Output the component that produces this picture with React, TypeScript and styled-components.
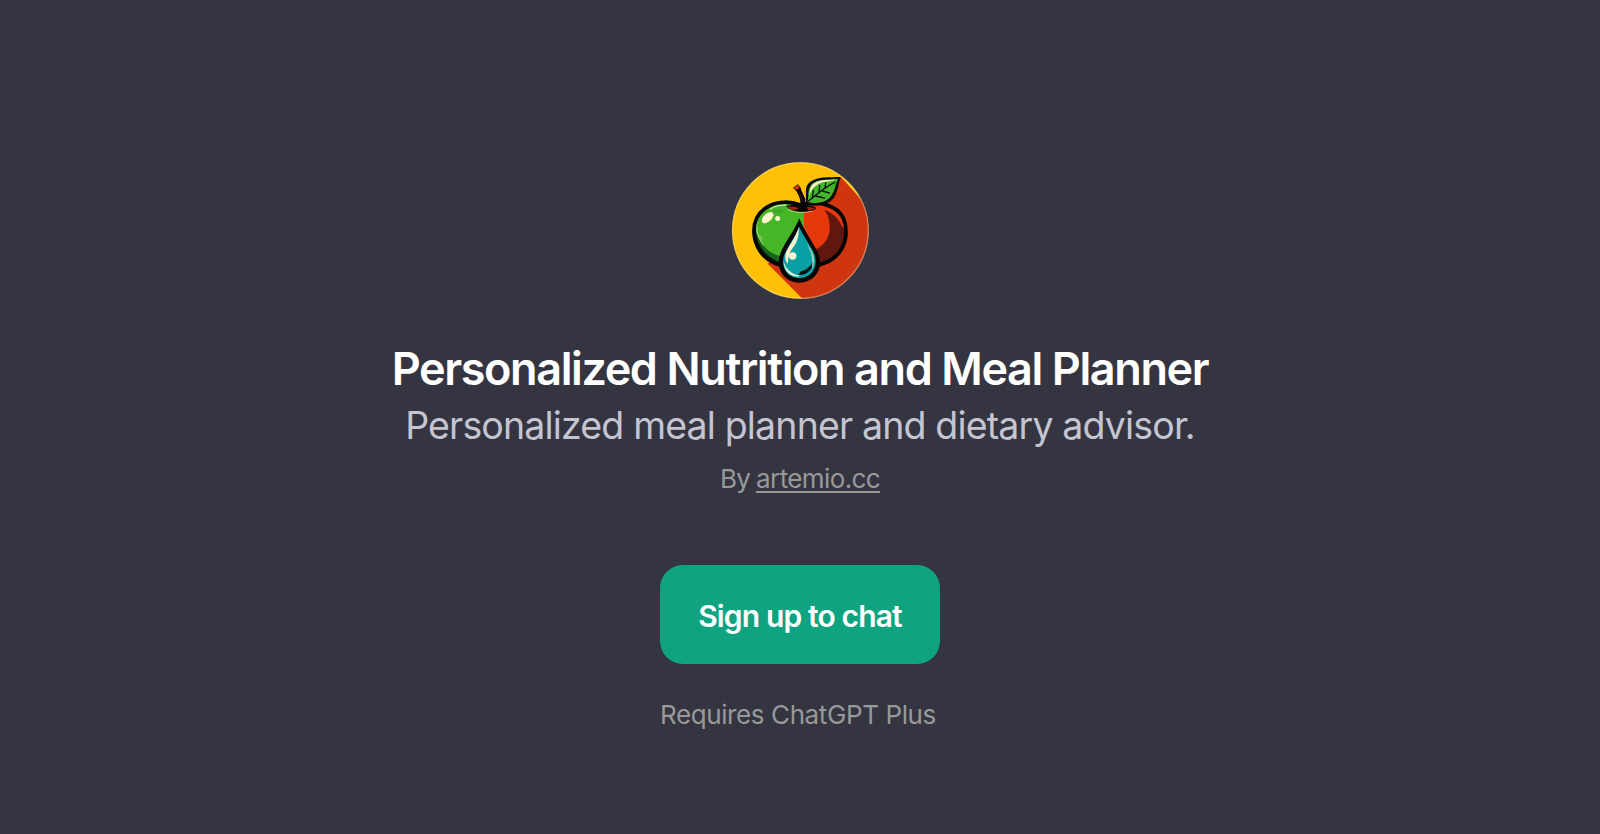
import styled, { createGlobalStyle } from "styled-components";

const GlobalStyle = createGlobalStyle`
  * {
    box-sizing: border-box;
  }
  body {
    margin: 0;
    background: #343541;
    font-family: "Inter", "Liberation Sans", sans-serif;
  }
`;

function AppleLogo() {
    return (
        <Logo viewBox="0 0 480 480" aria-hidden="true">
            <defs>
                <clipPath id="disc">
                    <circle cx="241" cy="241.500" r="205" />
                </clipPath>
                <clipPath id="apple">
                    <path d="M241 168C213 154 176 154 149 167C117 183 100 212 102 249C104 291 131 326 165 340C190 350 218 354 241 354C265 354 291 348 312 340C352 326 378 290 378 247C378 208 360 180 328 168C300 155 269 157 241 168Z" />
                </clipPath>
            </defs>
            {/* background */}
            <g clipPath="url(#disc)">
                <rect width="480" height="480" fill="#ffc006" />
                <path d="M362 80L470 200V470H271L143 341L300 200Z" fill="#cf350f" />
            </g>
            <circle cx="241" cy="241.500" r="203.500" fill="none" stroke="#fff" strokeOpacity=".3" strokeWidth="4" />
            {/* apple */}
            <g clipPath="url(#apple)">
                <rect x="90" y="140" width="162" height="230" fill="#46b526" />
                <rect x="252" y="140" width="140" height="230" fill="#e6370d" />
                <path d="M100 210C111 278 141 310 188 320L193 365H90Z" fill="#17651c" />
                <path d="M106 228C107 285 141 324 183 337L170 350C120 323 101 280 106 228Z" fill="#0b2710" />
                <path d="M313 180C337 211 340 273 287 298L280 360H390V250L365 228C356 205 337 188 313 180Z" fill="#5f1710" />
                <path d="M150 178C162 169 178 165 199 165" fill="none" stroke="#f7edc7" strokeWidth="3" />
                <path d="M111 214C108 241 116 267 131 285M119 257L127 269" fill="none" stroke="#abd88a" strokeWidth="3" />
                <path d="M160 181Q178 175 190 181L187 192L165 188Z" fill="#3ca926" />
                <path d="M314 168C344 175 359 188 367 211" fill="none" stroke="#ef5d31" strokeWidth="3" />
            </g>
            <path d="M241 165C213 154 176 153 149 167C117 183 100 212 102 249C104 291 131 326 165 340C190 350 218 354 241 354C265 354 291 348 312 340C352 326 378 290 378 247C378 208 360 180 328 168C300 155 269 157 241 165Z" fill="none" stroke="#020403" strokeWidth="11" />
            <ellipse cx="143" cy="203" rx="21" ry="12" transform="rotate(-43 143 203)" fill="#fff5cf" />
            <circle cx="173" cy="205.500" r="7.500" fill="#fff5cf" />
            {/* stem and hollow */}
            <path d="M198 168C218 162 271 160 289 174C277 190 218 193 198 168Z" fill="#050605" />
            <path d="M201 170C214 168 225 170 238 175L222 181Q209 179 201 170Z" fill="#a82212" />
            <path d="M259 172Q274 171 286 176L267 181Z" fill="#a82212" />
            <path d="M205 179C222 188 255 190 278 183" fill="none" stroke="#f4dfb6" strokeWidth="2" />
            <path d="M219 113L234 103L243 115C243 123 249 130 256 148L253 181H242C243 150 239 139 228 122Z" fill="#050505" />
            <path d="M222 112L235 105L238 115L227 120Z" fill="#d93113" />
            <path d="M238 127Q246 143 246 154" fill="none" stroke="#63200e" strokeWidth="2" />
            {/* leaf */}
            <path d="M362 81C330 82 290 79 269 97C251 112 261 132 257 162C279 171 311 169 332 153C354 136 353 106 362 81Z" fill="#050d06" />
            <path d="M354 86C324 90 293 86 276 102C260 118 268 138 262 156C281 161 309 160 326 146C344 130 345 107 354 86Z" fill="#44b52b" />
            <path d="M347 88C315 92 294 88 278 103C267 114 270 132 267 145C271 122 282 107 303 99C315 94 330 97 347 88Z" fill="#f1efc2" />
            <path d="M260 158C286 137 307 115 344 97M277 145L280 121M297 127L299 106M315 112L317 99M286 138L313 144M304 122L328 129" fill="none" stroke="#06160a" strokeWidth="4" strokeLinecap="round" />
            {/* water drop */}
            <path d="M238 205C225 238 202 268 187 297C159 350 190 398 238 398C286 398 317 352 290 301C274 271 250 237 238 205Z" fill="#030606" />
            <path d="M238 230C229 252 209 281 197 305C176 347 199 383 238 385C277 384 298 346 281 308C269 282 247 254 238 230Z" fill="#08a0a4" />
            <path d="M237 231C236 266 231 277 216 297C205 313 205 327 203 341C193 330 194 313 202 299C214 278 227 259 237 231Z" fill="#fff3c9" />
            <circle cx="218" cy="318" r="11" fill="#fff5cf" />
            <path d="M191 333C196 357 214 373 242 377C218 387 190 366 191 333Z" fill="#d9edd2" />
            <path d="M280 331C280 358 260 379 234 374C242 371 237 366 245 363C262 360 273 348 280 331Z" fill="#031416" />
            <path d="M260 279C286 312 287 339 275 358C280 332 275 307 260 279Z" fill="#9ed2bd" />
        </Logo>
    );
}

function App() {
    return (
        <>
            <GlobalStyle />
            <Container>
                <AppleLogo />
                <Title>Personalized Nutrition and Meal Planner</Title>
                <Description>Personalized meal planner and dietary advisor.</Description>
                <Author>
                    By <AuthorLink href="#">artemio.cc</AuthorLink>
                </Author>
                <SignUp>
                    <SignUpButton type="button">Sign up to chat</SignUpButton>
                    <Notice>Requires ChatGPT Plus</Notice>
                </SignUp>
            </Container>
        </>
    );
}

const Container = styled.main`
  display: flex;
  flex-direction: column;
  align-items: center;
  height: 834px;
  padding-top: 150px;
  overflow: hidden;
  white-space: nowrap;
`;

const Logo = styled.svg`
  display: block;
  flex-shrink: 0;
  width: 160px;
  height: 160px;
`;

const Title = styled.h1`
  margin: 31px 0 0;
  color: #fff;
  font-size: 45px;
  font-weight: 600;
  line-height: 56px;
  letter-spacing: -1.4px;
`;

const Description = styled.p`
  margin: 5px 0 0;
  color: #c5c5d2;
  font-size: 37.500px;
  line-height: 48px;
  letter-spacing: -0.84px;
`;

const Author = styled.p`
  margin: 11px 0 0;
  color: #999;
  font-size: 26px;
  line-height: 36px;
  letter-spacing: -0.6px;
  word-spacing: -1px;
`;

const AuthorLink = styled.a`
  color: inherit;
  text-decoration-thickness: 2px;
  text-underline-offset: 3px;
`;

const SignUp = styled.div`
  display: flex;
  flex-direction: column;
  width: 280px;
  margin-top: 68px;
`;

const SignUpButton = styled.button`
  height: 99px;
  padding-top: 4px;
  border: 0;
  border-radius: 23px;
  background: #10a37f;
  color: #fff;
  font-family: inherit;
  font-size: 30px;
  font-weight: 600;
  letter-spacing: -0.85px;
`;

const Notice = styled.span`
  margin-top: 33px;
  color: #999;
  font-size: 26px;
  line-height: 36px;
  letter-spacing: -0.4px;
`;

export default App;
